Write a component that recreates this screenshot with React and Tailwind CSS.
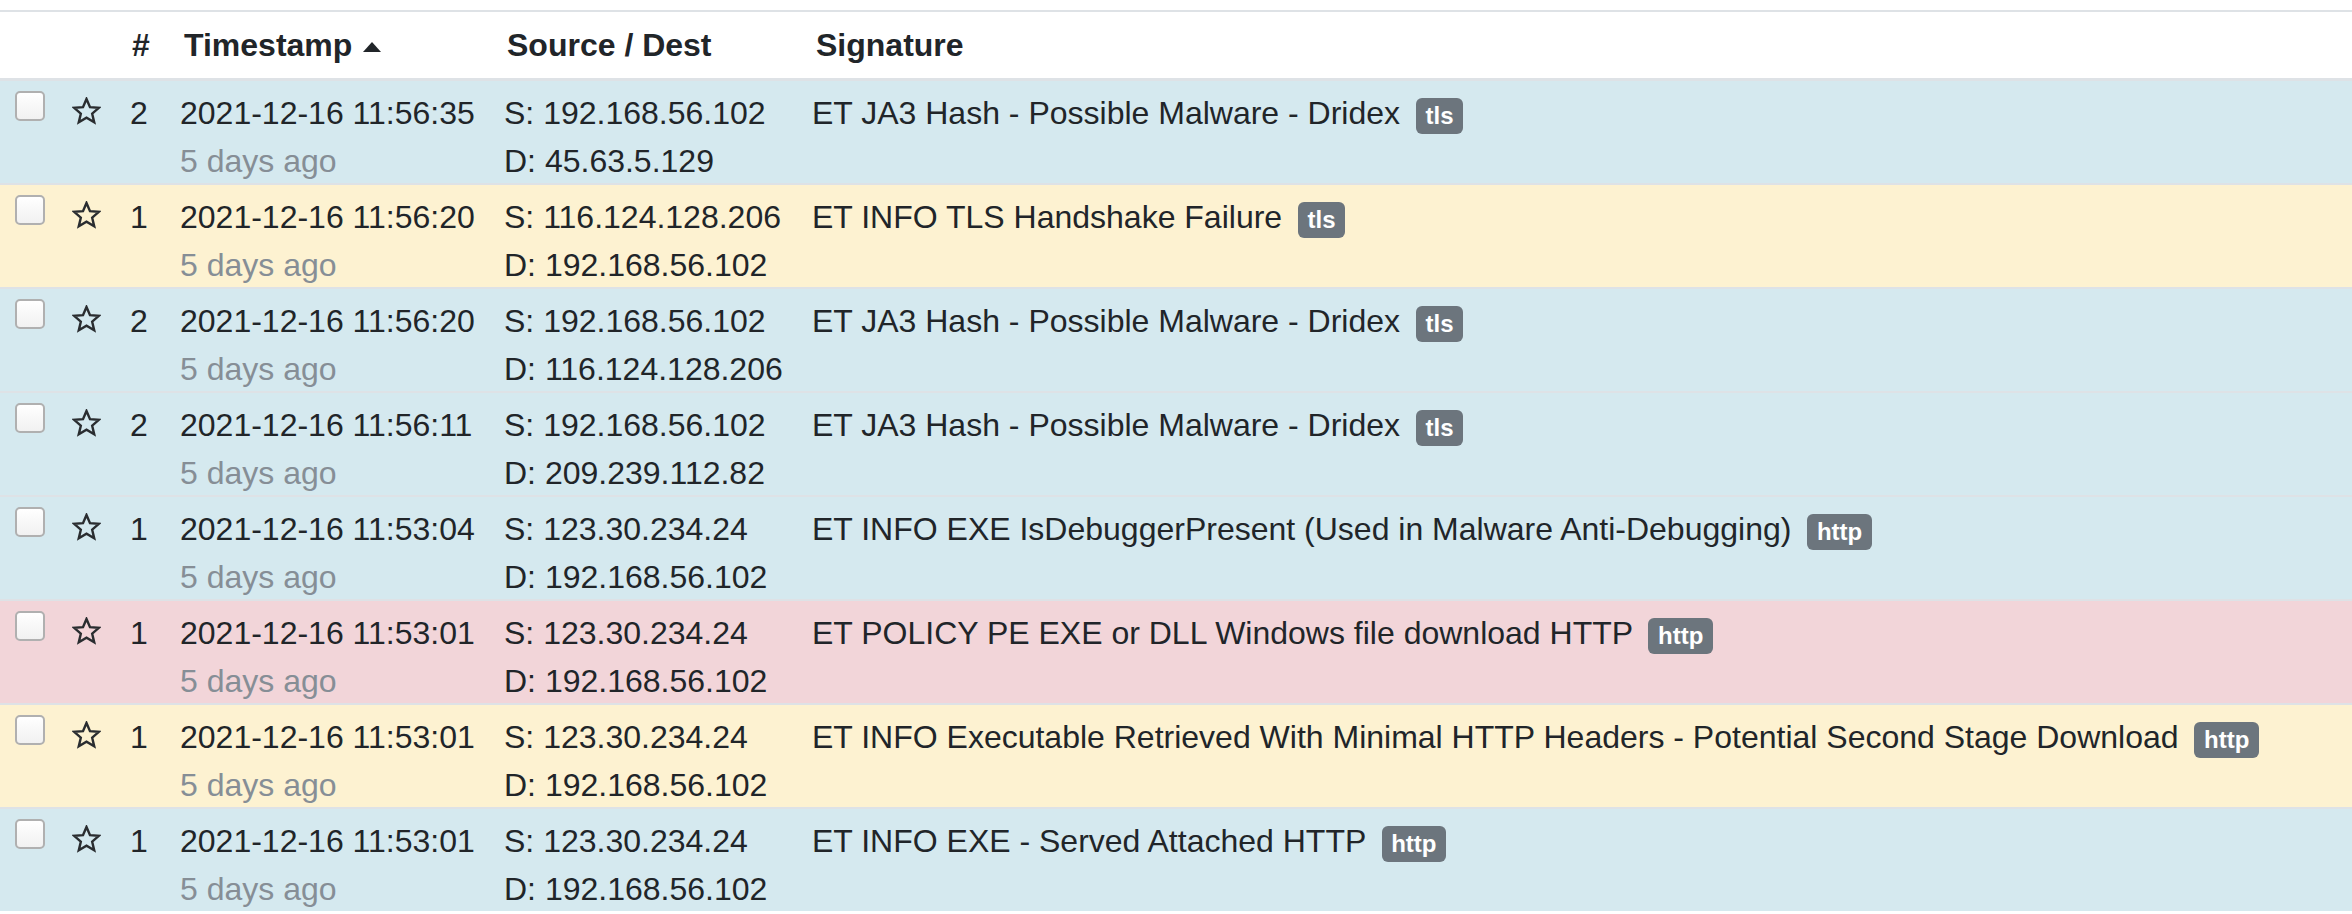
import React from "react";

const rows = [
  { bg: "bg-[#d5e9ef]", n: "2", ts: "2021-12-16 11:56:35", s: "192.168.56.102", d: "45.63.5.129", sig: "ET JA3 Hash - Possible Malware - Dridex", tag: "tls" },
  { bg: "bg-[#fdf2d1]", n: "1", ts: "2021-12-16 11:56:20", s: "116.124.128.206", d: "192.168.56.102", sig: "ET INFO TLS Handshake Failure", tag: "tls" },
  { bg: "bg-[#d5e9ef]", n: "2", ts: "2021-12-16 11:56:20", s: "192.168.56.102", d: "116.124.128.206", sig: "ET JA3 Hash - Possible Malware - Dridex", tag: "tls" },
  { bg: "bg-[#d5e9ef]", n: "2", ts: "2021-12-16 11:56:11", s: "192.168.56.102", d: "209.239.112.82", sig: "ET JA3 Hash - Possible Malware - Dridex", tag: "tls" },
  { bg: "bg-[#d5e9ef]", n: "1", ts: "2021-12-16 11:53:04", s: "123.30.234.24", d: "192.168.56.102", sig: "ET INFO EXE IsDebuggerPresent (Used in Malware Anti-Debugging)", tag: "http" },
  { bg: "bg-[#f2d5d9]", n: "1", ts: "2021-12-16 11:53:01", s: "123.30.234.24", d: "192.168.56.102", sig: "ET POLICY PE EXE or DLL Windows file download HTTP", tag: "http" },
  { bg: "bg-[#fdf2d1]", n: "1", ts: "2021-12-16 11:53:01", s: "123.30.234.24", d: "192.168.56.102", sig: "ET INFO Executable Retrieved With Minimal HTTP Headers - Potential Second Stage Download", tag: "http" },
  { bg: "bg-[#d5e9ef]", n: "1", ts: "2021-12-16 11:53:01", s: "123.30.234.24", d: "192.168.56.102", sig: "ET INFO EXE - Served Attached HTTP", tag: "http" },
];

function Checkbox() {
  return (
    <div className="w-[30px] h-[30px] rounded-[5px] border-2 border-[#b0b0b0] bg-gradient-to-b from-white to-[#f1f1f1]" />
  );
}

function Star() {
  return (
    <svg width="29" height="28" viewBox="0 0 24 23" className="block">
      <polygon
        points="12,1.5 14.9,8.3 22.2,8.9 16.7,13.7 18.4,20.9 12,17.1 5.6,20.9 7.3,13.7 1.8,8.9 9.1,8.3"
        fill="none"
        stroke="#2a2d30"
        strokeWidth="2"
        strokeLinejoin="miter"
      />
    </svg>
  );
}

function Badge({ children }) {
  return (
    <span className="inline-block align-baseline ml-[7px] px-[9.6px] py-[6px] rounded-[6px] bg-[#6c757d] text-white font-bold text-[24px] leading-none">
      {children}
    </span>
  );
}

export default function App() {
  return (
    <div className="w-[2352px] h-[914px] overflow-hidden bg-white text-[#212529] text-[32px] leading-[48px] font-['Liberation_Sans',Arial,sans-serif]">
      <div className="h-[10px]" />
      <div className="flex h-[69px] border-t-2 border-b border-[#dee2e6] font-bold">
        <div className="w-[60px] shrink-0" />
        <div className="w-[58px] shrink-0" />
        <div className="w-[50px] shrink-0 pl-[14px] pt-[9px]">#</div>
        <div className="w-[324px] shrink-0 pl-[16px] pt-[9px] flex items-start">
          <span>Timestamp</span>
          <svg width="18" height="10" viewBox="0 0 18 10" className="ml-[11px] mt-[21px]">
            <polygon points="9,0 18,10 0,10" fill="#212529" />
          </svg>
        </div>
        <div className="w-[308px] shrink-0 pl-[15px] pt-[9px]">Source / Dest</div>
        <div className="flex-1 pl-[16px] pt-[9px]">Signature</div>
      </div>
      {rows.map((r, i) => (
        <div key={i} className={`flex h-[104px] shrink-0 border-t-2 border-[#dee2e6] ${r.bg}`}>
          <div className="w-[60px] shrink-0 pl-[15px] pt-[10px]">
            <Checkbox />
          </div>
          <div className="w-[58px] shrink-0 pl-[12px] pt-[16px]">
            <Star />
          </div>
          <div className="w-[50px] shrink-0 pl-[12px] pt-[8px]">{r.n}</div>
          <div className="w-[324px] shrink-0 pl-[12px] pt-[8px]">
            <div>{r.ts}</div>
            <div className="text-[#868e96]">5 days ago</div>
          </div>
          <div className="w-[308px] shrink-0 pl-[12px] pt-[8px]">
            <div>S: {r.s}</div>
            <div>D: {r.d}</div>
          </div>
          <div className="flex-1 pl-[12px] pt-[8px] whitespace-nowrap">
            {r.sig} <Badge>{r.tag}</Badge>
          </div>
        </div>
      ))}
    </div>
  );
}
